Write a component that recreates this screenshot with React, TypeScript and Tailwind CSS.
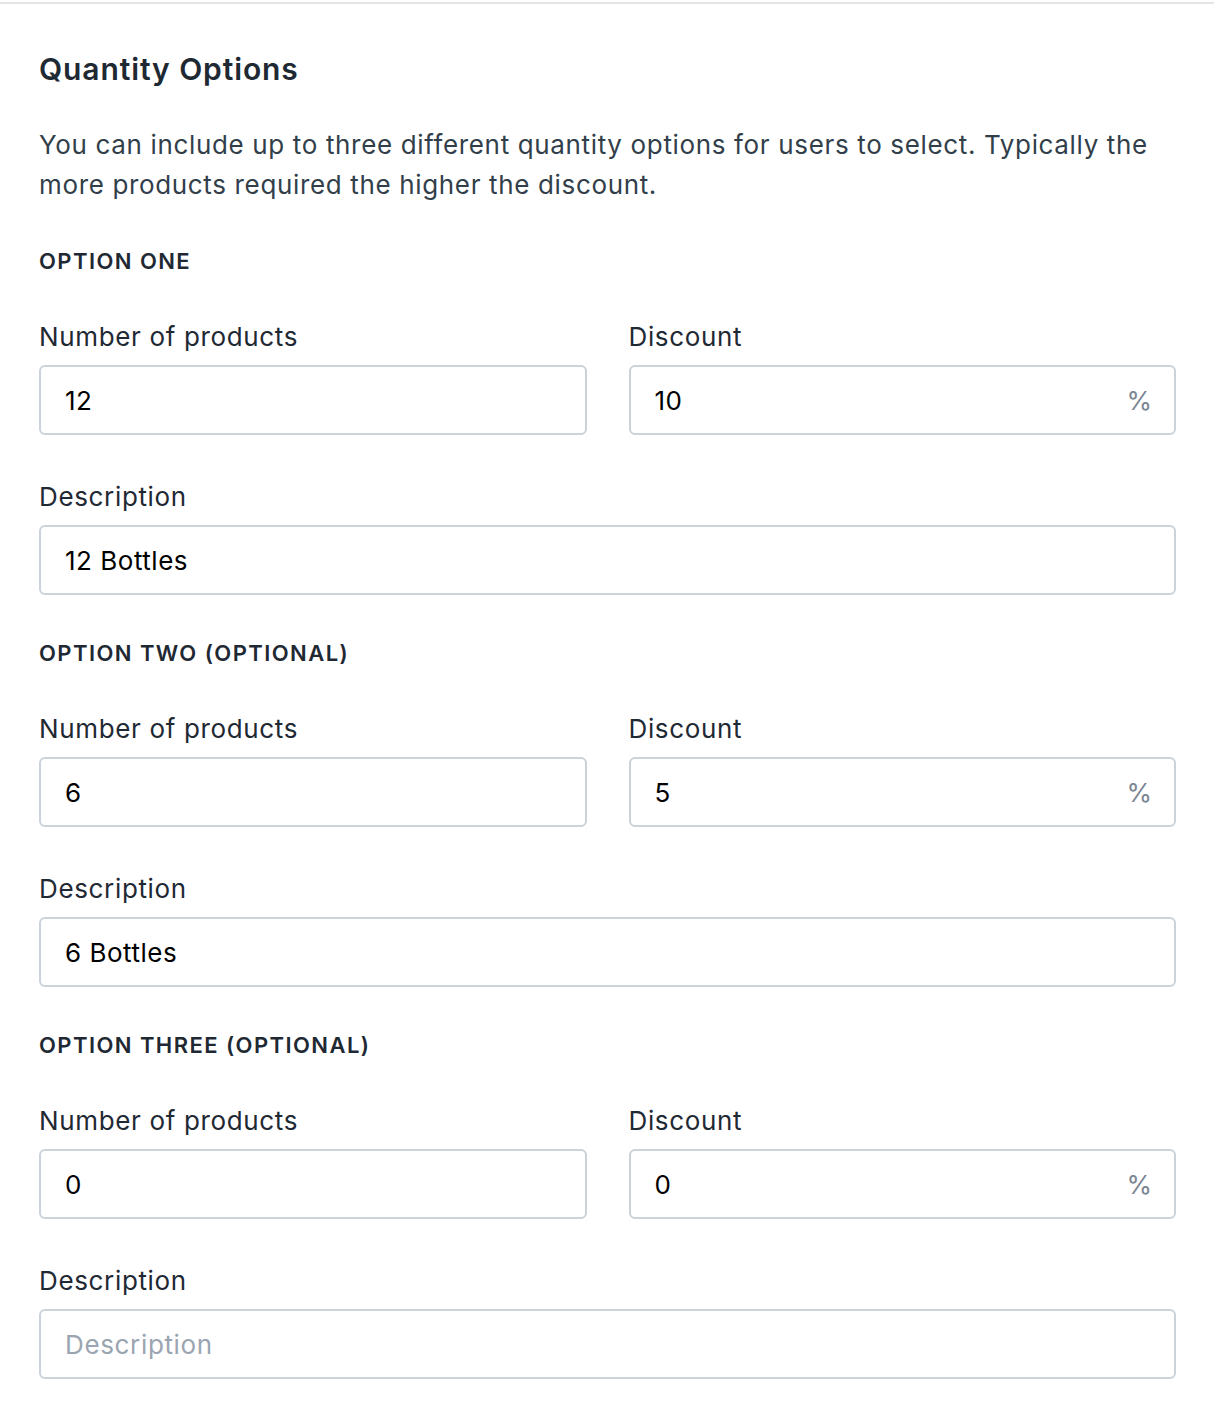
const options = [
  { title: "OPTION ONE", count: "12", discount: "10", desc: "12 Bottles" },
  { title: "OPTION TWO (OPTIONAL)", count: "6", discount: "5", desc: "6 Bottles" },
  { title: "OPTION THREE (OPTIONAL)", count: "0", discount: "0", desc: "" },
]

function Field({ label, value, suffix, placeholder }: { label: string; value: string; suffix?: string; placeholder?: string }) {
  return (
    <div className="flex flex-col flex-1">
      <div className="text-[26px] leading-[32px] tracking-[0.025em] text-[#1f2933]">{label}</div>
      <div className="mt-[12px] h-[70px] flex items-center pl-[24px] pr-[22px] border-2 border-[#cbd2d9] rounded-[6px] bg-white">
        {value ? (
          <span className="flex-1 text-[26px] tracking-[0.02em] text-black">{value}</span>
        ) : (
          <span className="flex-1 text-[26px] tracking-[0.025em] text-[#9aa5b1]">{placeholder}</span>
        )}
        {suffix && <span className="text-[26px] text-[#7b8794]">{suffix}</span>}
      </div>
    </div>
  )
}

export default function App() {
  return (
    <div className="w-[1214px] h-[1416px] bg-white font-['Inter',sans-serif] overflow-hidden">
      <div className="mt-[2px] border-t-2 border-[#e4e4e4]" />
      <div className="pl-[39px] pr-[38px] pt-[47px]">
        <h2 className="text-[30px] leading-[36px] font-semibold tracking-[0.03em] text-[#1f2933]">Quantity Options</h2>
        <p className="mt-[38px] text-[26px] leading-[40px] tracking-[0.025em] text-[#323f4b]">
          You can include up to three different quantity options for users to select. Typically the more products required the higher the discount.
        </p>

        {options.map((o, i) => (
          <div key={o.title} className={i === 0 ? "mt-[42px]" : "mt-[44px]"}>
            <div className="text-[22px] leading-[28px] font-semibold tracking-[0.065em] text-[#1f2933]">{o.title}</div>
            <div className="mt-[46px] flex gap-[42px]">
              <Field label="Number of products" value={o.count} />
              <Field label="Discount" value={o.discount} suffix="%" />
            </div>
            <div className="mt-[46px] flex">
              <Field label="Description" value={o.desc} placeholder="Description" />
            </div>
          </div>
        ))}
      </div>
    </div>
  )
}
